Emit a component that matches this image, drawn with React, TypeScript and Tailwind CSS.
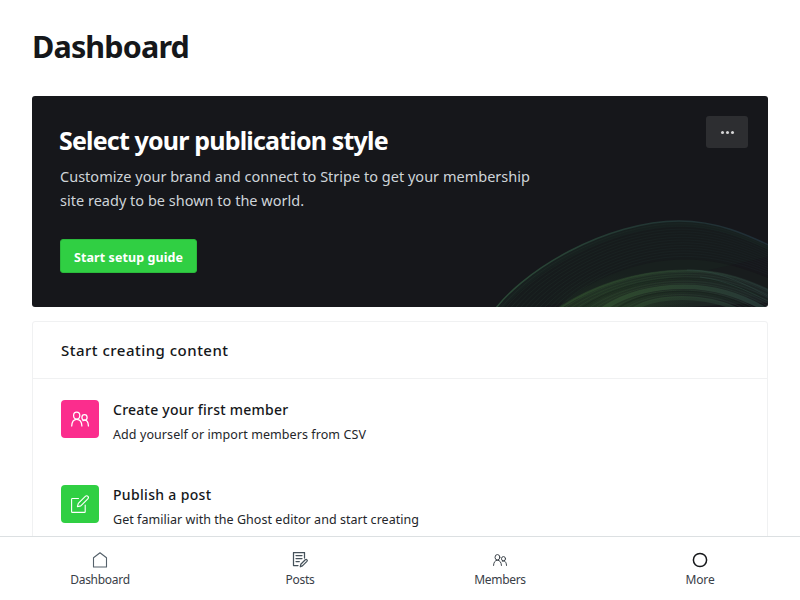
import React from "react";

type IconProps = { className?: string };

function MembersIcon({ className }: IconProps) {
  return (
    <svg className={className} viewBox="0 0 18 16" fill="none" stroke="currentColor" strokeWidth="1.25" strokeLinecap="round">
      <ellipse cx="5.700" cy="4.500" rx="3.100" ry="3.500" />
      <path d="M.7 15C.9 11 2.700 8.300 5.700 8.300s5 2.700 5.200 6.700" />
      <ellipse cx="13.500" cy="6.400" rx="2.600" ry="2.800" />
      <path d="M11.900 9.700c.5-.3 1-.5 1.600-.5 2.300 0 3.800 2.400 3.900 5.800" />
    </svg>
  );
}

function ComposeIcon({ className }: IconProps) {
  return (
    <svg className={className} viewBox="0 0 18 18" fill="none" stroke="currentColor" strokeWidth="1.1" strokeLinejoin="round" strokeLinecap="round">
      <path d="M7.500 3.500H1.300c-.4 0-.7.3-.7.700v12.500c0 .4.300.7.700.7h12.200c.4 0 .7-.3.700-.7V10" />
      <path d="M6.400 11.700l.9-3.300 7-7c.8-.8 1.900-.8 2.600-.1s.7 1.800-.1 2.600l-7 7-3.400.8z" />
    </svg>
  );
}

function HomeIcon() {
  return (
    <svg className="h-4 w-4" viewBox="0 0 16 16" fill="none" stroke="#54606a" strokeWidth="1.1" strokeLinejoin="round">
      <path d="M1.500 5.700 8 .7l6.500 5v9.300h-13z" />
    </svg>
  );
}

function PostsIcon() {
  return (
    <svg className="h-4 w-4" viewBox="0 0 16 16" fill="none" stroke="#45515a" strokeWidth="1.25" strokeLinejoin="round" strokeLinecap="round">
      <path d="M6 13.500H1.500v-13h11v5.500M4 3.500h6M4 6.500h6M4 9.500h3.300" />
      <path d="m8.300 14.800.5-2.500 4.500-4.500c1.200-1 2.600.5 1.600 1.600l-4.500 4.500z" />
    </svg>
  );
}

/** x/y pairs of a two-segment arc: start, two controls, peak, two controls, end. */
type Arc = number[];
const rim: Arc = [488, 319, 520, 269, 609, 221, 679, 221, 716, 221, 745, 233, 785, 253];
const rimInner: Arc = [547, 319, 571, 285, 629, 255, 684, 255, 717, 255, 752, 264, 800, 288];
const core: Arc = [548, 315, 587, 286, 636, 270, 687, 270, 722, 270, 748, 278, 792, 301];
const coreInner: Arc = [626, 315, 641, 301, 662, 298, 682, 298, 707, 298, 732, 304, 755, 319];

/** Arc lying between two others, t = 0 giving the first and t = 1 the second. */
function between(a: Arc, b: Arc, t: number) {
  const p = a.map((v, i) => (v + (b[i] - v) * t).toFixed(1));
  return `M${p[0]} ${p[1]}C${p.slice(2, 8).join(" ")} ${p.slice(8, 14).join(" ")}`;
}

const rimSteps = Array.from({ length: 13 }, (_, i) => 0.08 + i * 0.08);
const coreSteps = Array.from({ length: 13 }, (_, i) => i * 0.08);

function Swirl() {
  return (
    <svg className="absolute right-0 bottom-0 h-[107px] w-[288px]" viewBox="480 200 288 107" fill="none">
      <defs>
        <linearGradient id="rim" gradientUnits="userSpaceOnUse" x1="490" y1="0" x2="768" y2="0">
          <stop offset="0" stopColor="#2c4b37" />
          <stop offset=".5" stopColor="#233833" />
          <stop offset="1" stopColor="#202d37" />
        </linearGradient>
        <linearGradient id="core" gradientUnits="userSpaceOnUse" x1="550" y1="0" x2="768" y2="0">
          <stop offset="0" stopColor="#304f2c" />
          <stop offset=".5" stopColor="#2d4730" />
          <stop offset="1" stopColor="#283a39" />
        </linearGradient>
        <radialGradient id="glow" gradientUnits="userSpaceOnUse" cx="618" cy="310" r="75" gradientTransform="translate(0 155) scale(1 .5)">
          <stop offset="0" stopColor="#3c692d" stopOpacity=".25" />
          <stop offset="1" stopColor="#25482d" stopOpacity="0" />
        </radialGradient>
      </defs>
      <path d={between(rim, rimInner, 0)} fill="#1b3329" fillOpacity=".13" />
      {rimSteps.map((t) => <path key={t} d={between(rim, rimInner, t)} stroke="url(#rim)" strokeOpacity=".22" strokeWidth=".9" />)}
      <path d={between(rim, rimInner, 0.08)} stroke="#25503c" strokeOpacity=".1" strokeWidth="5" />
      <path d={between(rim, rimInner, 0)} stroke="url(#rim)" strokeWidth="1.500" />
      <path d={between(rimInner, core, 0.3)} fill="#31502e" fillOpacity=".1" />
      <path d={between(core, coreInner, 0)} fill="url(#core)" fillOpacity=".32" />
      <path d="M530 307h238v-40H560z" fill="url(#glow)" />
      {coreSteps.map((t) => <path key={t} d={between(core, coreInner, t)} stroke="url(#core)" strokeOpacity=".4" />)}
      <path d={between(core, coreInner, 0.03)} stroke="url(#core)" strokeOpacity=".7" strokeWidth="1.5" />
      <path d={between(core, coreInner, 0.31)} stroke="#111915" strokeOpacity=".3" strokeWidth="2" />
      <path d={between(core, coreInner, 0.6)} stroke="url(#core)" strokeOpacity=".85" strokeWidth="4.500" />
      <path d={between(core, coreInner, 0.78)} stroke="#111915" strokeOpacity=".3" strokeWidth="2" />
      <path d={between(core, coreInner, 1)} stroke="url(#core)" strokeOpacity=".6" strokeWidth="4" />
      <path d="M687 270c30 0 55 12 88 30M700 277c25 3 43 12 70 25" stroke="#314c44" strokeOpacity=".45" />
    </svg>
  );
}

type TaskProps = { title: string; detail: string; color: string; icon: React.ReactNode; titleClass: string; detailClass: string };

function Task({ title, detail, color, icon, titleClass, detailClass }: TaskProps) {
  return (
    <div className="flex h-[85px] items-start gap-3.5">
      <div className={`flex h-[38px] w-[38px] shrink-0 items-center justify-center rounded-[4px] text-white ${color}`}>{icon}</div>
      <div className="whitespace-nowrap">
        <h3 className={`text-[14px] leading-5 font-medium text-[#15171a] ${titleClass}`}>{title}</h3>
        <p className={`mt-[5px] text-[12.500px] leading-5 text-[#24262a] ${detailClass}`}>{detail}</p>
      </div>
    </div>
  );
}

export default function App() {
  return (
    <div className="flex h-[600px] w-[800px] flex-col overflow-hidden bg-white font-['Noto_Sans','Open_Sans',sans-serif] text-[#15171a]">
      <main className="min-h-0 flex-1 overflow-hidden px-8 pt-6">
        <h1 className="h-[72px] text-[30.500px] leading-[44px] font-bold tracking-[-0.850px]">Dashboard</h1>
        <section className="relative h-[211px] overflow-hidden rounded-[3px] bg-[#16171b]">
          <Swirl />
          <div className="relative flex justify-between pt-5 pr-5 pl-7">
            <div className="whitespace-nowrap">
              <h2 className="mt-[7px] -ml-px text-[25px] leading-[34px] font-bold tracking-[-0.82px] text-white">Select your publication style</h2>
              <p className="mt-[7px] text-[14.500px] leading-6 tracking-[0.010px] text-[#ced4d9]">
                Customize your brand and connect to Stripe to get your membership
                <br />
                site ready to be shown to the world.
              </p>
              <button className="mt-[27px] h-[34px] w-[137px] rounded-[3px] border border-[#2bba3c] bg-[#30cf43] pt-1 text-[12.500px] font-bold tracking-[0.080px] text-white">Start setup guide</button>
            </div>
            <button className="flex h-8 w-[42px] items-center justify-center gap-[2px] rounded-[3px] bg-[#2d2e31]" aria-label="Options">
              <i className="h-[3px] w-[3px] rounded-full bg-[#d6d6d7]" />
              <i className="h-[3px] w-[3px] rounded-full bg-[#d6d6d7]" />
              <i className="h-[3px] w-[3px] rounded-full bg-[#d6d6d7]" />
            </button>
          </div>
        </section>
        <section className="mt-3.5 h-[300px] rounded-[3px] border border-[#f0f1f2]">
          <h2 className="h-[57px] border-b border-[#f0f1f2] pl-7 text-[15px] leading-[57px] font-medium tracking-[0.480px]">Start creating content</h2>
          <div className="pt-[21px] pl-7">
            <Task title="Create your first member" detail="Add yourself or import members from CSV" color="bg-[#fb2d8d]" icon={<MembersIcon className="h-4 w-[18px]" />} titleClass="tracking-[0.240px]" detailClass="tracking-[0.080px]" />
            <Task title="Publish a post" detail="Get familiar with the Ghost editor and start creating" color="bg-[#30cf43]" icon={<ComposeIcon className="h-[18px] w-[18px]" />} titleClass="tracking-[0.320px]" detailClass="tracking-[0.040px]" />
          </div>
        </section>
      </main>
      <nav className="grid h-16 shrink-0 grid-cols-4 border-t border-[#dce0e2] bg-white text-[12px] tracking-[-0.300px] text-[#394047]">
        <a className="flex flex-col items-center pt-[15px]"><HomeIcon /><span className="mt-[3px] leading-[18px]">Dashboard</span></a>
        <a className="flex flex-col items-center pt-[15px]"><PostsIcon /><span className="mt-[3px] leading-[18px] tracking-[-0.250px]">Posts</span></a>
        <a className="flex flex-col items-center pt-[15px]"><MembersIcon className="h-4 w-3.5" /><span className="mt-[3px] leading-[18px]">Members</span></a>
        <a className="flex flex-col items-center pt-[15px]">
          <svg className="h-4 w-4" viewBox="0 0 16 16"><circle cx="8" cy="8" r="6.600" fill="none" stroke="#15171a" strokeWidth="1.500" /></svg>
          <span className="mt-[3px] leading-[18px] tracking-[-0.150px]">More</span>
        </a>
      </nav>
    </div>
  );
}
